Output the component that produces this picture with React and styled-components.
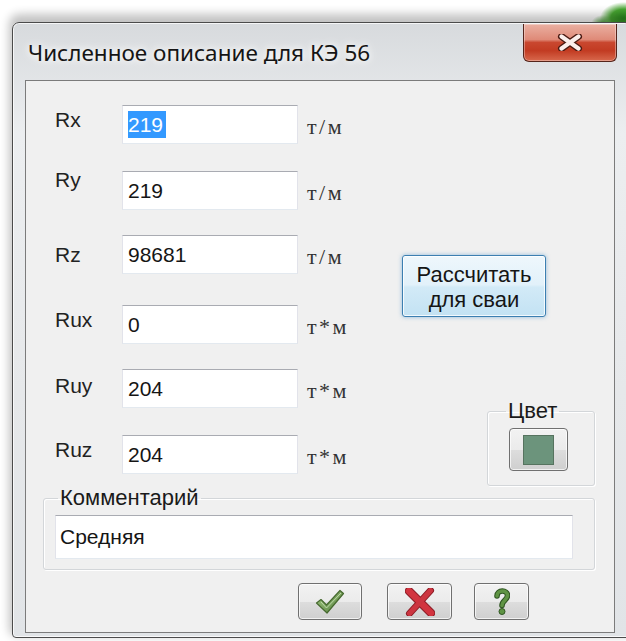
import React from "react";
import styled, { createGlobalStyle } from "styled-components";

const GlobalStyle = createGlobalStyle`
  html, body {
    margin: 0;
    padding: 0;
    background: #fff;
    overflow: hidden;
  }
  body {
    font-family: "Liberation Sans", Arial, sans-serif;
  }
`;

// desktop behind the dialog, with a bit of foliage peeking in the corner
const Screen = styled.div`
  width: 626px;
  height: 641px;
  box-sizing: border-box;
  padding: 22px 0 0 12px;
  overflow: hidden;
  background:
    radial-gradient(ellipse 24px 16px at 624px 18px, #2c8a1f 0, #48a632 55%, rgba(120, 200, 90, 0) 100%),
    radial-gradient(ellipse 12px 9px at 603px 24px, #3d9a2a 0, rgba(80, 170, 60, 0) 100%),
    #fff;
`;

const Window = styled.div`
  width: 620px;
  height: 616px;
  box-sizing: border-box;
  display: flex;
  flex-direction: column;
  border: 1px solid #4b4b4b;
  border-radius: 7px 7px 4px 4px;
  background: linear-gradient(180deg, #d7dadd 0%, #eceef0 18%, #e6e8ea 60%, #e1e4e7 100%);
  box-shadow: 0 -5px 10px 3px rgba(0, 0, 0, 0.24), inset 0 0 0 1px rgba(255, 255, 255, 0.75);
`;

const TitleBar = styled.div`
  display: flex;
  align-items: flex-start;
  height: 57px;
  flex: none;
`;

const Title = styled.div`
  padding: 15px 0 0 15px;
  font-family: "Noto Sans", "Open Sans", sans-serif;
  font-size: 22.5px;
  line-height: 30px;
  color: #151515;
  text-shadow: 0 0 12px #fff, 0 0 6px #fff;
`;

const CloseButton = styled.div`
  margin: 1px 14px 0 auto;
  width: 94px;
  height: 38px;
  box-sizing: border-box;
  display: flex;
  align-items: center;
  justify-content: center;
  border: 1px solid #55241b;
  border-top: none;
  border-radius: 0 0 6px 6px;
  background: linear-gradient(180deg, #eab0a2 0%, #df8a78 42%, #c9472f 50%, #c23b22 72%, #d8694d 100%);
  box-shadow: inset 0 0 0 1px rgba(255, 255, 255, 0.35);
`;

const Client = styled.div`
  flex: 1;
  margin: 0 4px 4px 12px;
  width: 590px;
  box-sizing: border-box;
  border: 1px solid #7b7b7b;
  background: #f0f0f0;
  display: flex;
  flex-direction: column;
`;

const TopSection = styled.div`
  display: flex;
  align-items: flex-start;
  padding: 24px 0 0 29px;
`;

const Fields = styled.div`
  width: 330px;
  display: flex;
  flex-direction: column;
`;

const Row = styled.div`
  display: grid;
  grid-template-columns: 67px 176px max-content;
  height: 39px;
  margin-top: ${(p) => p.$gap}px;
`;

const Label = styled.div`
  align-self: start;
  margin-top: ${(p) => p.$lift}px;
  font-size: 21px;
  line-height: 24px;
  color: #222;
`;

const TextBox = styled.div`
  box-sizing: border-box;
  height: ${(p) => p.$height || 39}px;
  width: ${(p) => p.$width || 176}px;
  display: flex;
  align-items: center;
  padding-left: ${(p) => p.$pad || 5}px;
  background: #fff;
  border: 1px solid #e2e3ea;
  border-top-color: #a9abb2;
  border-bottom-color: #e3e9ef;
  font-size: 21px;
  color: #151515;
`;

const Selected = styled.span`
  background: #3399ff;
  color: #fff;
  line-height: 27px;
  padding-right: 3px;
`;

const Unit = styled.div`
  align-self: end;
  margin-bottom: 7px;
  padding-left: 9px;
  font-family: "Liberation Serif", "Times New Roman", serif;
  font-size: 22px;
  line-height: 21px;
  letter-spacing: 2.5px;
  color: #333;
`;

const Side = styled.div`
  width: 210px;
  display: flex;
  flex-direction: column;
  align-items: flex-start;
`;

const CalcButton = styled.button`
  margin: 150px 0 0 17px;
  width: 144px;
  height: 62px;
  padding: 2px 0 0;
  border: 1px solid #3c7fb1;
  border-radius: 3px;
  background: linear-gradient(180deg, #eef7fc 0%, #e2f1fa 48%, #d2eaf7 52%, #c3e2f3 100%);
  box-shadow: inset 0 0 0 1px rgba(255, 255, 255, 0.8), 0 0 4px rgba(60, 140, 200, 0.55);
  font-family: "Liberation Sans", Arial, sans-serif;
  font-size: 22px;
  line-height: 25px;
  color: #151515;
`;

const Group = styled.fieldset`
  box-sizing: border-box;
  margin: ${(p) => p.$margin};
  padding: 0 0 ${(p) => p.$bottom}px 0;
  width: ${(p) => p.$width}px;
  height: ${(p) => p.$height}px;
  border: 1px solid #d3d6d9;
  border-radius: 3px;
  box-shadow: inset 1px 1px 0 #fff, 1px 1px 0 #fff;
  align-self: ${(p) => p.$align || "auto"};
`;

const Legend = styled.legend`
  margin-left: ${(p) => p.$indent}px;
  padding: 0 2px;
  font-size: 22px;
  line-height: 24px;
  color: #1a1a1a;
`;

const ColorButton = styled.div`
  margin: 5px 0 0 21px;
  width: 59px;
  height: 43px;
  box-sizing: border-box;
  display: flex;
  align-items: center;
  justify-content: center;
  border: 1px solid #707070;
  border-radius: 4px;
  background: linear-gradient(180deg, #f2f2f2 0%, #ebebeb 50%, #dddddd 51%, #cfcfcf 100%);
  box-shadow: inset 0 0 0 1px rgba(255, 255, 255, 0.7);
`;

const Swatch = styled.div`
  width: 31px;
  height: 30px;
  box-sizing: border-box;
  border: 1px solid #56735f;
  background: #6c947c;
`;

const CommentBox = styled(TextBox)`
  margin: 5px 0 0 11px;
`;

const Buttons = styled.div`
  display: flex;
  margin-top: 13px;
  padding-left: 272px;
`;

const IconButton = styled.div`
  margin-left: ${(p) => p.$gap || 0}px;
  width: ${(p) => p.$width}px;
  height: 37px;
  box-sizing: border-box;
  display: flex;
  align-items: center;
  justify-content: center;
  border: 1px solid #707070;
  border-radius: 4px;
  background: linear-gradient(180deg, #f2f2f2 0%, #ebebeb 50%, #dddddd 51%, #cfcfcf 100%);
  box-shadow: inset 0 0 0 1px rgba(255, 255, 255, 0.7);
`;

const rows = [
  { name: "Rx", value: "219", unit: "т/м", gap: 0, lift: 3, selected: true },
  { name: "Ry", value: "219", unit: "т/м", gap: 27, lift: -3 },
  { name: "Rz", value: "98681", unit: "т/м", gap: 25, lift: 8 },
  { name: "Rux", value: "0", unit: "т*м", gap: 31, lift: 3 },
  { name: "Ruy", value: "204", unit: "т*м", gap: 25, lift: 5 },
  { name: "Ruz", value: "204", unit: "т*м", gap: 27, lift: 3 },
];

const CloseGlyph = () => (
  <svg width="26" height="17" viewBox="0 0 26 17">
    <path d="M4.5 2.5 L21.5 14.5 M21.5 2.5 L4.5 14.5" stroke="#4a1a12" strokeWidth="7" strokeLinecap="round" />
    <path d="M4.5 2.5 L21.5 14.5 M21.5 2.5 L4.5 14.5" stroke="#fbefec" strokeWidth="4.2" strokeLinecap="round" />
  </svg>
);

const CheckGlyph = () => (
  <svg width="30" height="26" viewBox="0 0 30 26">
    <defs>
      <linearGradient id="okFill" x1="0" y1="0" x2="1" y2="1">
        <stop offset="0" stopColor="#a3c984" />
        <stop offset="1" stopColor="#55803c" />
      </linearGradient>
    </defs>
    <path
      d="M1.5 14 L6 10.5 L11.5 16 L25 1.5 L28.5 4.5 L12 24 Z"
      fill="url(#okFill)"
      stroke="#46692f"
      strokeWidth="1.2"
      strokeLinejoin="round"
    />
    <path d="M6 13 L11.5 19 L26 4" fill="none" stroke="#d0e6bd" strokeWidth="1" opacity="0.8" />
  </svg>
);

const CancelGlyph = () => (
  <svg width="30" height="28" viewBox="0 0 30 28">
    <path d="M4 3 L26 25" stroke="#8b1d26" strokeWidth="8.5" strokeLinecap="round" />
    <path d="M25.5 2.5 L4.5 25.5" stroke="#8b1d26" strokeWidth="7" strokeLinecap="round" />
    <path d="M4 3 L26 25" stroke="#d2343f" strokeWidth="6.5" strokeLinecap="round" />
    <path d="M25.5 2.5 L4.5 25.5" stroke="#cc3540" strokeWidth="5" strokeLinecap="round" />
  </svg>
);

const HelpGlyph = () => (
  <svg width="16" height="28" viewBox="0 0 16 28">
    <path
      d="M3 8 C3 1.5 13.5 1.5 13.5 7.5 C13.5 12 8 12.5 8 17.5"
      fill="none"
      stroke="#2f5522"
      strokeWidth="5.6"
      strokeLinecap="round"
    />
    <path
      d="M3 8 C3 1.5 13.5 1.5 13.5 7.5 C13.5 12 8 12.5 8 17.5"
      fill="none"
      stroke="#5f9444"
      strokeWidth="3.6"
      strokeLinecap="round"
    />
    <circle cx="8" cy="23.5" r="3" fill="#5f9444" stroke="#2f5522" strokeWidth="1" />
  </svg>
);

function App() {
  return (
    <>
      <GlobalStyle />
      <Screen>
        <Window>
          <TitleBar>
            <Title>Численное описание для КЭ 56</Title>
            <CloseButton>
              <CloseGlyph />
            </CloseButton>
          </TitleBar>

          <Client>
            <TopSection>
              <Fields>
                {rows.map((r) => (
                  <Row key={r.name} $gap={r.gap}>
                    <Label $lift={r.lift}>{r.name}</Label>
                    <TextBox>{r.selected ? <Selected>{r.value}</Selected> : r.value}</TextBox>
                    <Unit>{r.unit}</Unit>
                  </Row>
                ))}
              </Fields>

              <Side>
                <CalcButton>
                  Рассчитать
                  <br />
                  для сваи
                </CalcButton>
                <Group $margin="82px 0 0 0" $width={108} $height={87} $bottom={14} $align="flex-end">
                  <Legend $indent={18}>Цвет</Legend>
                  <ColorButton>
                    <Swatch />
                  </ColorButton>
                </Group>
              </Side>
            </TopSection>

            <Group $margin="0 0 0 17px" $width={552} $height={84} $bottom={10}>
              <Legend $indent={14}>Комментарий</Legend>
              <CommentBox $width={518} $height={44} $pad={4}>
                Средняя
              </CommentBox>
            </Group>

            <Buttons>
              <IconButton $width={64}>
                <CheckGlyph />
              </IconButton>
              <IconButton $width={65} $gap={25}>
                <CancelGlyph />
              </IconButton>
              <IconButton $width={55} $gap={22}>
                <HelpGlyph />
              </IconButton>
            </Buttons>
          </Client>
        </Window>
      </Screen>
    </>
  );
}

export default App;
